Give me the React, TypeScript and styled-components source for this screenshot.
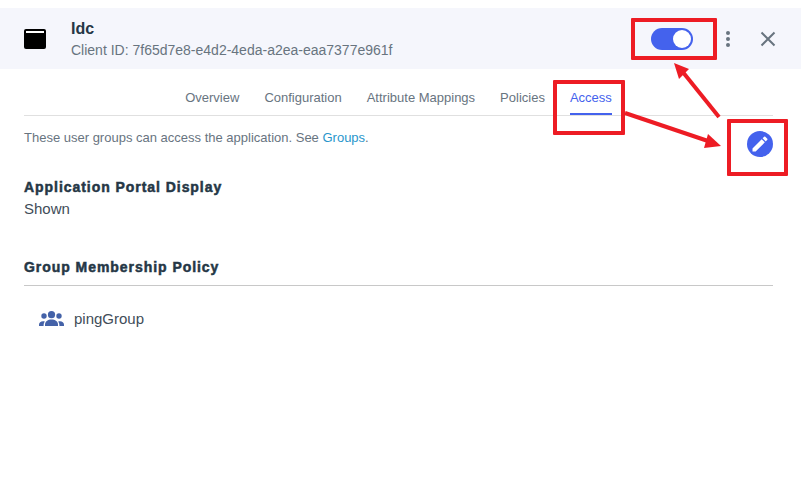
import React from "react";
import styled, { createGlobalStyle } from "styled-components";

const GlobalStyle = createGlobalStyle`
    html, body {
        margin: 0;
        padding: 0;
        background: #fff;
    }
    body {
        font-family: "Liberation Sans", Arial, sans-serif;
    }
`;

const tabs = ["Overview", "Configuration", "Attribute Mappings", "Policies", "Access"];

const GroupIcon = () => (
    <svg width="25" height="15" viewBox="0 0 25 15" fill="#4462a8">
        <circle cx="12.5" cy="3.7" r="3.6" />
        <circle cx="5" cy="5" r="2.7" />
        <circle cx="20" cy="5" r="2.7" />
        <path d="M6 15v-1.5c0-3 2.8-5 6.500-5s6.500 2 6.500 5V15z" />
        <path d="M0 15v-1.200c0-2 1.800-3.500 4-3.500.8 0 1.300.1 1.800.3-.8 1-1.200 2.200-1.200 3.400v1z" />
        <path d="M25 15v-1.200c0-2-1.800-3.500-4-3.500-.8 0-1.300.1-1.800.3.800 1 1.200 2.200 1.200 3.400v1z" />
    </svg>
);

export default function App() {
    return (
        <SC.Page>
            <GlobalStyle />
            <SC.Header>
                <SC.AppIcon>
                    <svg width="22" height="20" viewBox="0 0 22 20">
                        <rect width="22" height="20" rx="2" fill="#000" />
                        <rect x="2" y="2" width="18" height="2" fill="#fff" />
                    </svg>
                </SC.AppIcon>
                <SC.AppInfo>
                    <SC.AppName>Idc</SC.AppName>
                    <SC.ClientId>Client ID: 7f65d7e8-e4d2-4eda-a2ea-eaa7377e961f</SC.ClientId>
                </SC.AppInfo>
                <SC.Toggle>
                    <SC.Knob />
                </SC.Toggle>
                <SC.Kebab>
                    <SC.Dot />
                    <SC.Dot />
                    <SC.Dot />
                </SC.Kebab>
                <SC.Close>
                    <svg width="16" height="16" viewBox="0 0 16 16">
                        <path d="M1.500 1.500 L14.500 14.500 M14.500 1.500 L1.500 14.500" stroke="#68747f" strokeWidth="2" fill="none" />
                    </svg>
                </SC.Close>
            </SC.Header>
            <SC.Tabs>
                {tabs.map((tab) => (
                    <SC.Tab key={tab} $active={tab === "Access"}>{tab}</SC.Tab>
                ))}
            </SC.Tabs>
            <SC.Intro>
                These user groups can access the application. See <SC.Link>Groups</SC.Link>.
            </SC.Intro>
            <SC.SectionTitle>Application Portal Display</SC.SectionTitle>
            <SC.Value>Shown</SC.Value>
            <SC.PolicyTitle>Group Membership Policy</SC.PolicyTitle>
            <SC.GroupRow>
                <GroupIcon />
                <SC.GroupName>pingGroup</SC.GroupName>
            </SC.GroupRow>

            <SC.EditButton>
                <svg width="20" height="20" viewBox="0 0 24 24">
                    <path fill="#fff" d="M3 17.250V21h3.750L17.810 9.940l-3.750-3.750L3 17.250zM20.710 7.040a1 1 0 0 0 0-1.410l-2.340-2.340a1 1 0 0 0-1.410 0l-1.830 1.830 3.750 3.750 1.830-1.830z" />
                </svg>
            </SC.EditButton>
            <SC.RedBox $left={631} $top={18} $width={86} $height={42} />
            <SC.RedBox $left={553} $top={80} $width={72} $height={55} />
            <SC.RedBox $left={727} $top={119} $width={61} $height={57} />
            <SC.Arrows width="801" height="495" viewBox="0 0 801 495">
                <path d="M719 117 L682 71" stroke="#ed1c24" strokeWidth="4" fill="none" />
                <path d="M674 63 L689 69 L679 79 Z" fill="#ed1c24" />
                <path d="M625 113 L708 141" stroke="#ed1c24" strokeWidth="4" fill="none" />
                <path d="M721 146 L708 134 L704 148 Z" fill="#ed1c24" />
            </SC.Arrows>
        </SC.Page>
    );
}

const SC = {
    Page: styled.div`
        position: relative;
        width: 801px;
        height: 495px;
        padding-top: 8px;
        box-sizing: border-box;
        overflow: hidden;
        background: #fff;
    `,
    Header: styled.div`
        height: 61px;
        background: #f5f6fc;
        display: flex;
        align-items: center;
        padding: 0 24px;
    `,
    AppIcon: styled.div`
        width: 47px;
        display: flex;
        align-items: center;
    `,
    AppInfo: styled.div`
        flex: 1;
        display: flex;
        flex-direction: column;
        gap: 3px;
    `,
    AppName: styled.div`
        font-size: 16px;
        line-height: 20px;
        font-weight: 700;
        color: #253746;
    `,
    ClientId: styled.div`
        font-size: 14px;
        line-height: 16px;
        color: #68747f;
    `,
    Toggle: styled.div`
        width: 42px;
        height: 22px;
        border-radius: 11px;
        background: #4462ed;
        display: flex;
        align-items: center;
        justify-content: flex-end;
        padding: 0 2px;
        box-sizing: border-box;
        margin-right: 31px;
    `,
    Knob: styled.div`
        width: 18px;
        height: 18px;
        border-radius: 50%;
        background: #fff;
    `,
    Kebab: styled.div`
        width: 8px;
        display: flex;
        flex-direction: column;
        align-items: center;
        gap: 2px;
        margin-right: 28px;
    `,
    Dot: styled.span`
        width: 4px;
        height: 4px;
        border-radius: 50%;
        background: #68747f;
    `,
    Close: styled.div`
        width: 16px;
        height: 16px;
        margin-right: 1px;
    `,
    Tabs: styled.div`
        margin: 0 28px 0 24px;
        height: 46px;
        display: flex;
        justify-content: center;
        gap: 25px;
        border-bottom: 1px solid #e0e0e0;
        box-sizing: content-box;
    `,
    Tab: styled.div<{ $active?: boolean }>`
        height: 46px;
        box-sizing: border-box;
        padding-top: 21px;
        font-size: 13px;
        line-height: 16px;
        color: ${(p) => (p.$active ? "#4462ed" : "#68747f")};
        border-bottom: 2px solid ${(p) => (p.$active ? "#4462ed" : "transparent")};
    `,
    Intro: styled.div`
        margin: 13px 24px 0;
        font-size: 13px;
        line-height: 18px;
        color: #68747f;
    `,
    Link: styled.span`
        color: #2996cc;
    `,
    SectionTitle: styled.div`
        margin: 31px 24px 0;
        font-size: 14px;
        line-height: 18px;
        font-weight: 700;
        letter-spacing: 0.95px;
        -webkit-text-stroke: 0.5px #253746;
        color: #253746;
    `,
    Value: styled.div`
        margin: 4px 24px 0;
        font-size: 15px;
        line-height: 18px;
        color: #3f4d59;
    `,
    PolicyTitle: styled.div`
        margin: 40px 28px 0 24px;
        padding-bottom: 9px;
        font-size: 14px;
        line-height: 18px;
        font-weight: 700;
        letter-spacing: 0.95px;
        -webkit-text-stroke: 0.5px #253746;
        color: #253746;
        border-bottom: 1px solid #c8c8c8;
    `,
    GroupRow: styled.div`
        margin: 20px 0 0 39px;
        display: flex;
        align-items: center;
        gap: 10px;
    `,
    GroupName: styled.div`
        font-size: 15px;
        line-height: 25px;
        color: #3f4d59;
    `,
    EditButton: styled.div`
        position: absolute;
        left: 747px;
        top: 131px;
        width: 26px;
        height: 26px;
        border-radius: 50%;
        background: #4462ed;
        display: flex;
        align-items: center;
        justify-content: center;
    `,
    RedBox: styled.div<{ $left: number; $top: number; $width: number; $height: number }>`
        position: absolute;
        left: ${(p) => p.$left}px;
        top: ${(p) => p.$top}px;
        width: ${(p) => p.$width}px;
        height: ${(p) => p.$height}px;
        box-sizing: border-box;
        border: 4px solid #ed1c24;
        border-radius: 1px;
    `,
    Arrows: styled.svg`
        position: absolute;
        left: 0;
        top: 0;
        pointer-events: none;
    `,
};
